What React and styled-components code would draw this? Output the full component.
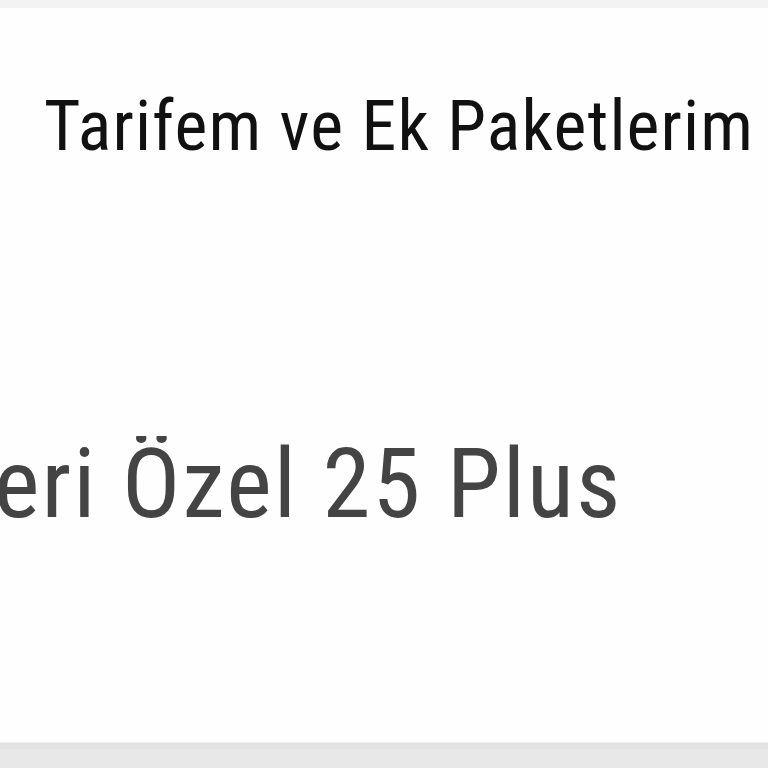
import styled, { createGlobalStyle } from 'styled-components'

const GlobalStyle = createGlobalStyle`
  html, body {
    margin: 0;
    padding: 0;
    background: #f3f3f3;
  }
  body {
    font-family: Roboto, "Open Sans", sans-serif;
  }
`

const Page = styled.div`
  height: 768px;
  display: flex;
  flex-direction: column;
  padding-top: 8px;
  box-sizing: border-box;
  overflow: hidden;
`

const Card = styled.section`
  height: 734px;
  background: #fefefe;
  border-bottom: 1px solid #ececec;
  display: flex;
  flex-direction: column;
  overflow: hidden;
`

const Title = styled.h1`
  margin: 0;
  padding: 83px 0 0 44px;
  font-size: 70px;
  font-stretch: 80%;
  line-height: 1;
  font-weight: 400;
  color: #111;
  white-space: nowrap;
  letter-spacing: 1.15px;
`

const PlanRow = styled.div`
  margin-top: 275px;
  display: flex;
  overflow: hidden;
`

const PlanName = styled.span`
  margin-left: -6px;
  font-size: 97px;
  font-stretch: 80%;
  line-height: 1;
  color: #444;
  white-space: nowrap;
  letter-spacing: 2.1px;
`

const Footer = styled.div`
  flex: 1;
  background: #e8e8e8;
  border-top: 6px solid #e3e3e3;
`

export default function App() {
  return (
    <>
      <GlobalStyle />
      <Page>
        <Card>
          <Title>Tarifem ve Ek Paketlerim</Title>
          <PlanRow>
            <PlanName>eri Özel 25 Plus</PlanName>
          </PlanRow>
        </Card>
        <Footer />
      </Page>
    </>
  )
}
